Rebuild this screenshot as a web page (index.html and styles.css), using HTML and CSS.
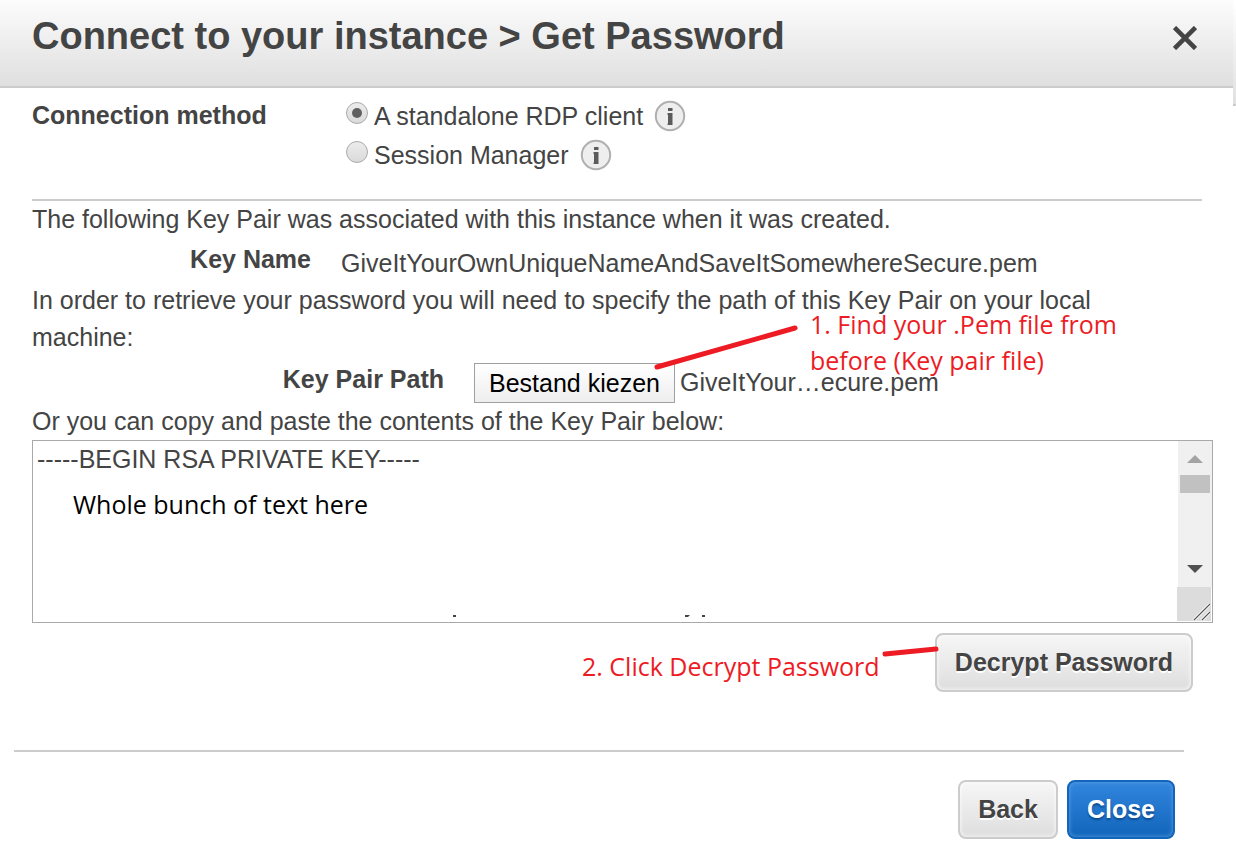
FILE: index.html
```html
<!DOCTYPE html>
<html lang="en">
<head>
<meta charset="utf-8">
<meta name="viewport" content="width=device-width, initial-scale=1">
<title>Connect to your instance</title>
<link rel="stylesheet" href="styles.css">
</head>
<body>
<div class="dialog">
  <div class="backdrop-edge"></div>
  <header class="header">
    <h1 class="title">Connect to your instance &gt; Get Password</h1>
    <button class="dismiss" type="button" aria-label="Close dialog">
      <svg width="24" height="24" viewBox="0 0 24 24"><path d="M1.500 1.500 22.500 22.500M22.500 1.500 1.500 22.500" stroke="#444" stroke-width="4.600" fill="none"/></svg>
    </button>
  </header>

  <main class="content">
    <fieldset class="methods">
      <legend class="methods-title">Connection method</legend>
      <div class="method">
        <input class="radio" type="radio" name="method" id="rdp" checked>
        <label for="rdp">A standalone RDP client</label>
        <svg class="info" viewBox="0 0 32 32"><circle cx="16" cy="16" r="14.2" fill="#eee" stroke="#b0b0b0" stroke-width="2"/><path d="M14 8h4.500v3H14zM14 13h4.500v12H14z" fill="#5c5c5c"/><path d="M13 13h1v2h-1zM13 23.500h1V25h-1z" fill="#aaa"/></svg>
      </div>
      <div class="method">
        <input class="radio" type="radio" name="method" id="session">
        <label for="session">Session Manager</label>
        <svg class="info" viewBox="0 0 32 32"><circle cx="16" cy="16" r="14.2" fill="#eee" stroke="#b0b0b0" stroke-width="2"/><path d="M14 8h4.500v3H14zM14 13h4.500v12H14z" fill="#5c5c5c"/><path d="M13 13h1v2h-1zM13 23.500h1V25h-1z" fill="#aaa"/></svg>
      </div>
    </fieldset>

    <p class="text">The following Key Pair was associated with this instance when it was created.</p>
    <div class="key-name">
      <span class="field-label">Key Name</span>
      <span class="key-value">GiveItYourOwnUniqueNameAndSaveItSomewhereSecure.pem</span>
    </div>
    <p class="text">In order to retrieve your password you will need to specify the path of this Key Pair on your local machine:</p>
    <div class="key-path">
      <label class="field-label path-label" for="choose">Key Pair Path</label>
      <button class="choose" id="choose" type="button">Bestand kiezen</button>
      <span class="file-name">GiveItYour…ecure.pem</span>
    </div>
    <label class="text" for="key">Or you can copy and paste the contents of the Key Pair below:</label>
  </main>

  <div class="key-box">
    <textarea class="key-text" id="key" spellcheck="false">-----BEGIN RSA PRIVATE KEY-----</textarea>
    <div class="scroll">
      <div class="track">
        <svg class="arrow" viewBox="0 0 16 8"><path d="M8 0 16 8H0z" fill="#a3a3a3"/></svg>
        <div class="thumb"></div>
        <svg class="arrow arrow-down" viewBox="0 0 16 8"><path d="M0 0H16L8 8z" fill="#505050"/></svg>
      </div>
      <svg class="grip" viewBox="0 0 34 34"><path d="M17 33 33 17M25 33 33 25" stroke="#fff" stroke-width="3"/><path d="M17 33 33 17M25 33 33 25" stroke="#555" stroke-width="1.1"/></svg>
    </div>
    <span class="note note-key">Whole bunch of text here</span>
    <svg class="clipped" viewBox="0 0 256 3"><path d="M1 0h3v2h-3zM233 0h5l-2 2h-3zM250 0h3v2h-3z" fill="#444"/></svg>
  </div>

  <div class="decrypt-row">
    <button class="button" type="button">Decrypt Password</button>
  </div>

  <footer class="footer">
    <button class="button" type="button">Back</button>
    <button class="button primary" type="button">Close</button>
  </footer>

  <p class="note note-find">1. Find your .Pem file from<br>before (Key pair file)</p>
  <p class="note note-decrypt">2. Click Decrypt Password</p>
  <svg class="stroke stroke-find" viewBox="0 0 148 48"><path d="M4 43 142 4" stroke="#ed1c24" stroke-width="5" stroke-linecap="round"/></svg>
  <svg class="stroke stroke-decrypt" viewBox="0 0 60 14"><path d="M4 9 55 4" stroke="#ed1c24" stroke-width="5" stroke-linecap="round"/></svg>
</div>
</body>
</html>
```
FILE: styles.css
```css
* { box-sizing: border-box; }

body {
  margin: 0;
  background: #fff;
  color: #444;
  font: 25px/37px "Liberation Sans", Arial, sans-serif;
}

button, textarea { font: inherit; }

.dialog { position: relative; }

.header {
  display: flex;
  justify-content: space-between;
  align-items: flex-start;
  margin-right: 3px;
  padding: 14px 36px 28px 32px;
  border-bottom: 2px solid #ccc;
  background: linear-gradient(#fcfcfc, #dfdfdf);
}

.backdrop-edge {
  position: absolute;
  top: 0;
  right: 0;
  width: 3px;
  height: 106px;
  border-bottom: 2px solid #ccc;
  background: linear-gradient(#fff, #e0e0e0);
}

.title {
  margin: 0;
  font-size: 38px;
  line-height: 44px;
}

.dismiss {
  display: flex;
  margin: 12px 0 0;
  padding: 0;
  border: 0;
  background: none;
}

.content {
  display: flex;
  flex-direction: column;
  padding: 0 34px 0 32px;
}

.methods {
  display: grid;
  grid-template-columns: 314px 1fr;
  margin: 0;
  padding: 9px 0 24px;
  border: 0;
  border-bottom: 2px solid #ccc;
}

.methods-title {
  float: left;
  grid-row: 1;
  padding: 0;
  font-weight: bold;
}

.method {
  display: flex;
  grid-column: 2;
  align-items: center;
  height: 39px;
}

.radio {
  appearance: none;
  display: grid;
  place-items: center;
  width: 22px;
  height: 22px;
  margin: 0 6px 8px 0;
  border: 1px solid #aaa;
  border-radius: 50%;
  background: linear-gradient(#ececec, #dadada);
}

.radio:checked::before {
  content: "";
  width: 10px;
  height: 10px;
  border-radius: 50%;
  background: #606060;
}

.info {
  width: 32px;
  height: 32px;
  margin: 0 0 2px 11px;
}

.text {
  margin: 0;
  padding-right: 20px;
}

.key-name {
  display: grid;
  grid-template-columns: 279px 1fr;
  column-gap: 30px;
  height: 44px;
}

.field-label {
  padding-top: 3px;
  font-weight: bold;
  text-align: right;
}

.key-value { padding-top: 7px; }

.key-path {
  display: flex;
  align-items: flex-start;
  height: 47px;
}

.path-label {
  width: 412px;
  padding-top: 5px;
}

.choose {
  height: 40px;
  margin: 7px 5px 0 30px;
  padding: 0 14px;
  border: 1px solid #a0a0a0;
  background: linear-gradient(#fff, #eee);
  color: #000;
  line-height: 38px;
}

.file-name { padding-top: 8px; }

.key-box {
  position: relative;
  display: flex;
  height: 183px;
  margin: 0 23px 0 32px;
  border: 1px solid #a9a9a9;
}

.key-text {
  flex: 1;
  min-width: 0;
  padding: 0 4px;
  border: 0;
  outline: 0;
  background: none;
  color: #444;
  overflow: hidden;
  resize: none;
}

.scroll {
  display: flex;
  flex-direction: column;
  align-items: flex-end;
  width: 35px;
}

.track {
  display: flex;
  flex: 1;
  flex-direction: column;
  align-items: center;
  width: 34px;
  padding: 14px 0;
  background: #f0f0f0;
}

.arrow {
  width: 16px;
  height: 8px;
}

.arrow-down { margin-top: auto; }

.thumb {
  width: 30px;
  height: 18px;
  margin-top: 12px;
  background: #c1c1c1;
}

.grip {
  width: 34px;
  height: 34px;
  margin: 0 1px 1px 0;
  background: #dcdcdc;
}

.clipped {
  position: absolute;
  bottom: 4px;
  left: 419px;
  width: 256px;
  height: 3px;
}

.decrypt-row {
  display: flex;
  justify-content: flex-end;
  padding: 10px 43px 58px;
}

.button {
  height: 59px;
  padding: 0 18px;
  border: 2px solid #ccc;
  border-radius: 8px;
  background: linear-gradient(#f6f6f6, #dedede);
  box-shadow: inset 0 0 4px #fff;
  color: #444;
  font-weight: bold;
  text-shadow: 0 2px 0 #fff;
}

.primary {
  border-color: #1166bb;
  background: linear-gradient(#3285dd, #1166bb);
  box-shadow: inset 0 0 4px #5fa0e5;
  color: #fff;
  text-shadow: 0 2px 2px #0a4a90;
}

.footer {
  display: flex;
  justify-content: flex-end;
  gap: 9px;
  margin: 0 52px 0 14px;
  padding: 28px 9px 20px;
  border-top: 2px solid #ccc;
}

.note {
  position: absolute;
  margin: 0;
  color: #ed1c24;
  font: 25px/36px "Open Sans", sans-serif;
  white-space: nowrap;
}

.note-key {
  top: 45px;
  left: 40px;
  color: #000;
}

.note-find {
  top: 306px;
  left: 810px;
}

.note-decrypt {
  top: 648px;
  left: 582px;
}

.stroke {
  position: absolute;
  fill: none;
}

.stroke-find {
  top: 324px;
  left: 653px;
  width: 148px;
  height: 48px;
}

.stroke-decrypt {
  top: 645px;
  left: 881px;
  width: 60px;
  height: 14px;
}
```
